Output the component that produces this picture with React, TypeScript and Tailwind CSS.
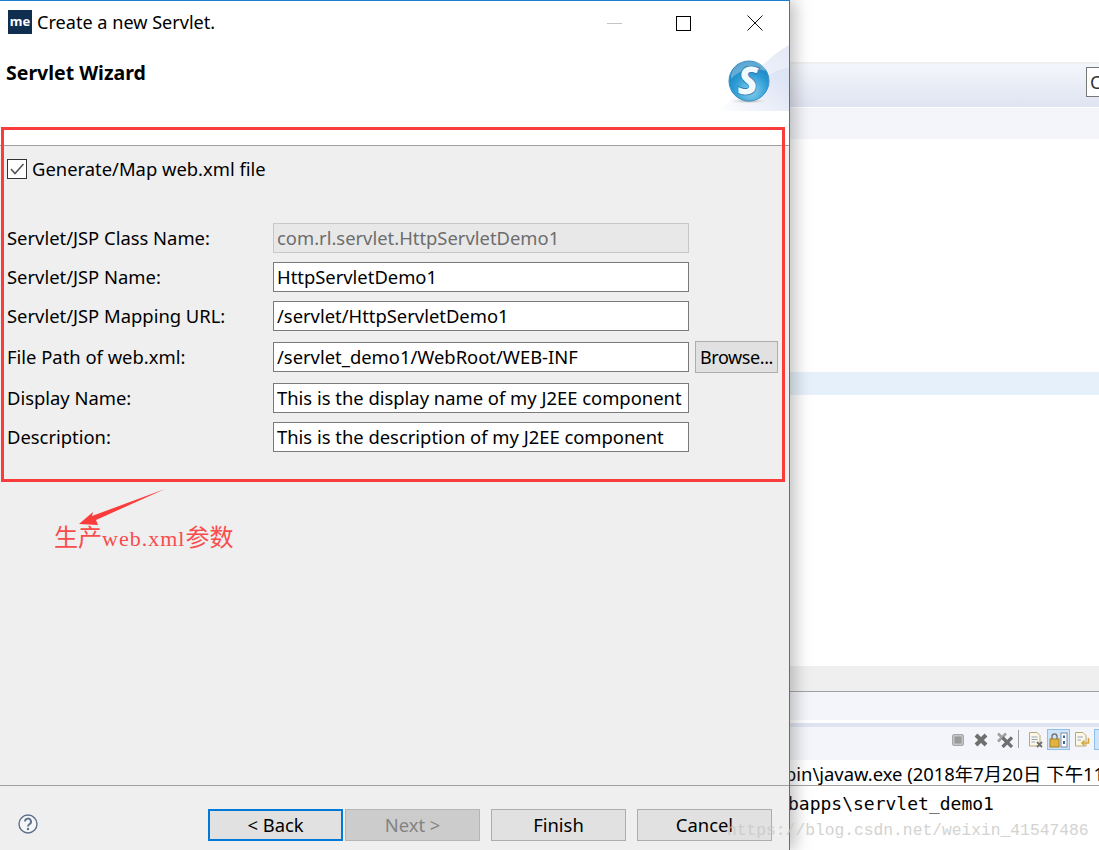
import React from 'react';

const uiFont = { fontFamily: '"Noto Sans", "Noto Sans CJK SC", sans-serif' };

const rows = [
  { label: 'Servlet/JSP Class Name:', value: 'com.rl.servlet.HttpServletDemo1', disabled: true },
  { label: 'Servlet/JSP Name:', value: 'HttpServletDemo1' },
  { label: 'Servlet/JSP Mapping URL:', value: '/servlet/HttpServletDemo1' },
  { label: 'File Path of web.xml:', value: '/servlet_demo1/WebRoot/WEB-INF', browse: true },
  { label: 'Display Name:', value: 'This is the display name of my J2EE component' },
  { label: 'Description:', value: 'This is the description of my J2EE component' },
];

const FormRow = ({ label, value, disabled, browse }: { label: string; value: string; disabled?: boolean; browse?: boolean }) => (
  <div className={browse ? 'flex items-center h-[32px] my-px' : 'flex items-center h-[30px]'}>
    <div className="w-[273px] pl-[7px] text-[18.4px] text-black whitespace-nowrap">{label}</div>
    <div
      className={
        disabled
          ? 'w-[416px] h-[30px] border border-[#c8c8c8] bg-[#e8e8e8] text-[#6d6d6d] pl-[3px] text-[18.4px] leading-[28px] whitespace-nowrap overflow-hidden'
          : 'w-[416px] h-[30px] border border-[#7a7a7a] bg-white text-black pl-[3px] text-[18.4px] leading-[28px] whitespace-nowrap overflow-hidden'
      }
    >
      {value}
    </div>
    {browse && (
      <div className="ml-[6px] w-[83px] h-[32px] border border-[#adadad] bg-[#e1e1e1] text-[18px] tracking-[-0.4px] leading-[30px] text-center text-black">
        Browse...
      </div>
    )}
  </div>
);

const WizardButton = ({ label, variant }: { label: string; variant?: 'focus' | 'off' }) => {
  let cls = 'border border-[#adadad] bg-[#e1e1e1] text-black leading-[30px]';
  if (variant === 'focus') cls = 'border-2 border-[#0078d7] bg-[#e1e1e1] text-black leading-[28px]';
  if (variant === 'off') cls = 'border border-[#b5b5b5] bg-[#cccccc] text-[#838383] leading-[30px]';
  return <div className={`w-[135px] h-[32px] text-center text-[18.4px] ${cls}`}>{label}</div>;
};

const ServletLogo = () => (
  <svg width="74" height="66" viewBox="0 0 74 66" className="absolute right-0 top-[44px]">
    <defs>
      <linearGradient id="swoosh" x1="0" y1="1" x2="1" y2="0">
        <stop offset="0" stopColor="#ffffff" />
        <stop offset="0.6" stopColor="#eef1fa" />
        <stop offset="1" stopColor="#e4e9f6" />
      </linearGradient>
      <linearGradient id="swooshInner" x1="0" y1="1" x2="1" y2="0.4">
        <stop offset="0" stopColor="#ffffff" />
        <stop offset="1" stopColor="#dde4f4" />
      </linearGradient>
      <radialGradient id="ball" cx="0.55" cy="0.75" r="0.8">
        <stop offset="0" stopColor="#8ad0ee" />
        <stop offset="0.55" stopColor="#2a9ad4" />
        <stop offset="1" stopColor="#1279b8" />
      </radialGradient>
      <radialGradient id="ballShadow" cx="0.5" cy="0.5" r="0.5">
        <stop offset="0" stopColor="#9a9a9a" />
        <stop offset="1" stopColor="#ffffff" stopOpacity="0" />
      </radialGradient>
    </defs>
    <path d="M0 66 C24 56 38 20 74 0 L74 66 Z" fill="url(#swoosh)" />
    <path d="M0 66 C28 58 48 24 74 23 L74 66 Z" fill="url(#swooshInner)" />
    <ellipse cx="34" cy="56" rx="22" ry="3" fill="url(#ballShadow)" />
    <circle cx="34" cy="36" r="20" fill="url(#ball)" stroke="#3d8fc4" strokeWidth="1" />
    <path d="M16 30 C19 18 31 14 43 18 C49 20 51 24 51 26 C39 22 25 24 16 34 Z" fill="#ffffff" opacity="0.3" />
    <text x="33" y="50" textAnchor="middle" fontSize="40" fontWeight="800" fontStyle="italic" fill="#f0f9fe" stroke="#1c6ea6" strokeWidth="0.7" fontFamily='"Open Sans", sans-serif'>
      S
    </text>
  </svg>
);

const ToolbarIcons = () => (
  <div className="flex items-start justify-end h-[33px] pt-[2px] overflow-hidden">
    <svg width="12" height="12" viewBox="0 0 12 12" className="mt-[5px] mr-[10px] shrink-0">
      <rect x="0.5" y="0.5" width="11" height="11" rx="1.5" fill="#c4c4c4" stroke="#a8a8a8" />
      <rect x="2.5" y="2.5" width="7" height="7" fill="#9a9a9a" />
    </svg>
    <svg width="14" height="14" viewBox="0 0 14 14" className="mt-[4px] mr-[9px] shrink-0">
      <path d="M2 2 L12 12 M12 2 L2 12" stroke="#6f6f6f" strokeWidth="4" />
    </svg>
    <svg width="16" height="16" viewBox="0 0 16 16" className="mt-[3px] mr-[5px] shrink-0">
      <path d="M1 1.5 L9 9.5 M9 1.5 L1 9.5" stroke="#a0a0a0" strokeWidth="2.6" />
      <path d="M5.5 5.5 L15 15 M15 5.5 L5.5 15" stroke="#6f6f6f" strokeWidth="3.2" />
    </svg>
    <div className="w-px h-[18px] mt-[1px] bg-[#a0a0a0] mr-[9px] shrink-0" />
    <svg width="15" height="16" viewBox="0 0 15 16" className="mt-[3px] mr-[4px] shrink-0">
      <path d="M1.5 0.5 H9 L12 3.5 V14 H1.5 Z" fill="#fdf8e6" stroke="#b8a878" />
      <path d="M3.5 5 H9.5 M3.5 7.5 H9.5 M3.5 10 H7" stroke="#8fa2c0" />
      <path d="M9 10 L14 15 M14 10 L9 15" stroke="#707070" strokeWidth="1.8" />
    </svg>
    <div className="w-[23px] h-[21px] bg-[#cfe4f8] border border-[#8fc0ea] flex items-center justify-center mr-[4px] shrink-0">
      <svg width="19" height="16" viewBox="0 0 19 16">
        <rect x="1" y="7" width="9" height="8" fill="#e3b341" stroke="#a97f1c" />
        <path d="M3 7 V4.5 A2.5 2.5 0 0 1 8 4.5 V7" fill="none" stroke="#777" strokeWidth="1.4" />
        <rect x="12" y="1" width="6" height="14" fill="#fff" stroke="#7a8aa0" />
        <path d="M15 3.5 V6 M15 9 V12" stroke="#42678f" strokeWidth="2" />
      </svg>
    </div>
    <svg width="16" height="16" viewBox="0 0 16 16" className="mt-[3px] mr-[4px] shrink-0">
      <path d="M1.5 0.5 H9 L12 3.5 V14 H1.5 Z" fill="#fdf8e6" stroke="#b8a878" />
      <path d="M3.5 5 H9 M3.5 8 H7" stroke="#8fa2c0" />
      <path d="M14.5 6 V11 H8 M10.5 8.5 L8 11 L10.5 13.5" fill="none" stroke="#d8a53a" strokeWidth="1.6" />
    </svg>
    <div className="w-[5px] h-[21px] bg-[#cfe4f8] border-l border-y border-[#8fc0ea] shrink-0" />
  </div>
);

const BackgroundIde = () => (
  <div className="flex-1 min-w-0 h-[850px] overflow-hidden bg-white flex flex-col" style={uiFont}>
    <div className="h-[62px] shrink-0" />
    <div className="h-[2px] shrink-0 bg-[#f0f0f0]" />
    <div className="h-[43px] shrink-0 bg-gradient-to-b from-[#f4f6fb] to-[#dfe4f2] flex items-center justify-end">
      <div className="w-[13px] h-[30px] mt-[-8px] border-y border-l border-[#777] bg-white text-[18px] leading-[28px] pl-[3px] overflow-hidden text-[#333]">C</div>
    </div>
    <div className="h-px shrink-0 bg-white" />
    <div className="h-[31px] shrink-0 bg-[#f3f5fa]" />
    <div className="h-[233px] shrink-0" />
    <div className="h-[23px] shrink-0 bg-[#e6f0fb]" />
    <div className="h-[271px] shrink-0" />
    <div className="h-[26px] shrink-0 bg-[#efefef] border-b border-[#a0a0a0]" />
    <div className="h-[28px] shrink-0 bg-[#f3f5fa]" />
    <div className="h-[3px] shrink-0 bg-white" />
    <div className="h-[4px] shrink-0 bg-[#dfe4f2]" />
    <div className="h-[33px] shrink-0 bg-[#f3f5fa]">
      <ToolbarIcons />
    </div>
    <div className="h-[26px] shrink-0 border-b border-[#a0a0a0] text-[18.4px] leading-[28px] text-black whitespace-nowrap pl-[1px]">
      <span className="inline-block -ml-[6px]">bin\javaw.exe (2018年7月20日 下午11</span>
    </div>
    <div className="text-[18px] leading-[36px] text-black whitespace-nowrap" style={{ fontFamily: '"DejaVu Sans Mono", monospace' }}>
      <span className="inline-block -ml-[2px]">bapps\servlet_demo1</span>
    </div>
  </div>
);

export default function App() {
  return (
    <div className="relative w-[1099px] h-[850px] overflow-hidden flex bg-white">
      <div
        className="relative z-10 w-[790px] h-[850px] shrink-0 flex flex-col bg-white border-t border-r border-[#1c7fd0] shadow-[6px_0_14px_rgba(90,90,90,0.35)]"
        style={uiFont}
      >
        <div className="relative h-[144px] shrink-0 bg-white">
          <div className="flex items-center h-[43px] pl-[8px]">
            <div className="w-[24px] h-[24px] mt-[-1px] bg-[#0f2d4f] text-white text-[13px] font-bold leading-[22px] text-center shrink-0">me</div>
            <div className="ml-[5px] text-[18.1px] text-black">Create a new Servlet.</div>
          </div>
          <div className="pl-[6px] mt-[14px] text-[19.5px] font-bold leading-[30px] text-black">Servlet Wizard</div>
          <ServletLogo />
          {/* window buttons */}
          <div className="absolute top-[14px] left-[607px] flex items-center">
            <div className="w-[15px] h-px bg-[#c4c4c4]" />
            <div className="ml-[54px] w-[15px] h-[15px] border border-black" />
            <svg width="16" height="16" viewBox="0 0 16 16" className="ml-[56px]">
              <path d="M0.5 0.5 L15.5 15.5 M15.5 0.5 L0.5 15.5" stroke="#111" />
            </svg>
          </div>
        </div>
        <div className="flex-1 min-h-0 bg-[#efefef] border-t border-[#a0a0a0] flex flex-col">
          <label className="flex items-center h-[20px] mt-[13px] pl-[7px]">
            <span className="w-[20px] h-[20px] border border-[#333] bg-white flex items-center justify-center shrink-0">
              <svg width="16" height="16" viewBox="0 0 16 16">
                <path d="M2 8 L6 12.5 L14.5 3" fill="none" stroke="#555" strokeWidth="1.6" />
              </svg>
            </span>
            <span className="ml-[5px] text-[18.4px] text-black whitespace-nowrap">Generate/Map web.xml file</span>
          </label>
          <div className="mt-[44px] flex flex-col gap-[9px]">
            {rows.map((row) => (
              <FormRow key={row.label} {...row} />
            ))}
          </div>
        </div>
        <div className="h-[65px] shrink-0 bg-[#efefef] border-t border-[#a0a0a0] flex items-start pt-[23px] pl-[18px] pr-[17px]">
          <svg width="20" height="20" viewBox="0 0 20 20" className="mt-[5px] shrink-0">
            <circle cx="10" cy="10" r="9" fill="#f5f6f8" stroke="#5f6f8c" strokeWidth="1.4" />
            <path d="M7 7.6 A3 3 0 1 1 11.4 10.2 C10.3 10.9 10 11.4 10 12.6" fill="none" stroke="#5f6f8c" strokeWidth="1.9" />
            <circle cx="10" cy="15" r="1.2" fill="#5f6f8c" />
          </svg>
          <div className="ml-auto flex">
            <WizardButton label="< Back" variant="focus" />
            <div className="ml-[2px]">
              <WizardButton label="Next >" variant="off" />
            </div>
            <div className="ml-[11px]">
              <WizardButton label="Finish" />
            </div>
            <div className="ml-[11px]">
              <WizardButton label="Cancel" />
            </div>
          </div>
        </div>
      </div>
      <BackgroundIde />

      {/* red annotation drawn over the dialog */}
      <div className="absolute z-20 left-[1px] top-[127px] w-[784px] h-[355px] border-[3px] border-[#fa3c3c]" />
      <svg width="90" height="40" viewBox="0 0 90 40" className="absolute z-20 left-[78px] top-[488px]">
        <path d="M87 1 L14 28 L15 24 L1 36 L20 37 L18 32 Z" fill="#fa3c3c" />
      </svg>
      <div className="absolute z-20 left-[54px] top-[520px] text-[24px] leading-[32px] text-[#f94c4c] whitespace-nowrap font-['Noto_Sans_CJK_SC',serif]">
        生产<span className="font-['Liberation_Serif',serif] text-[22px] tracking-[1px]">web.xml</span>参数
      </div>
      <div className="absolute z-30 left-[727px] top-[820px] text-[16.3px] leading-[22px] text-[#c9c9c5] opacity-80 whitespace-nowrap font-['Liberation_Mono',monospace]">
        https://blog.csdn.net/weixin_41547486
      </div>
    </div>
  );
}
